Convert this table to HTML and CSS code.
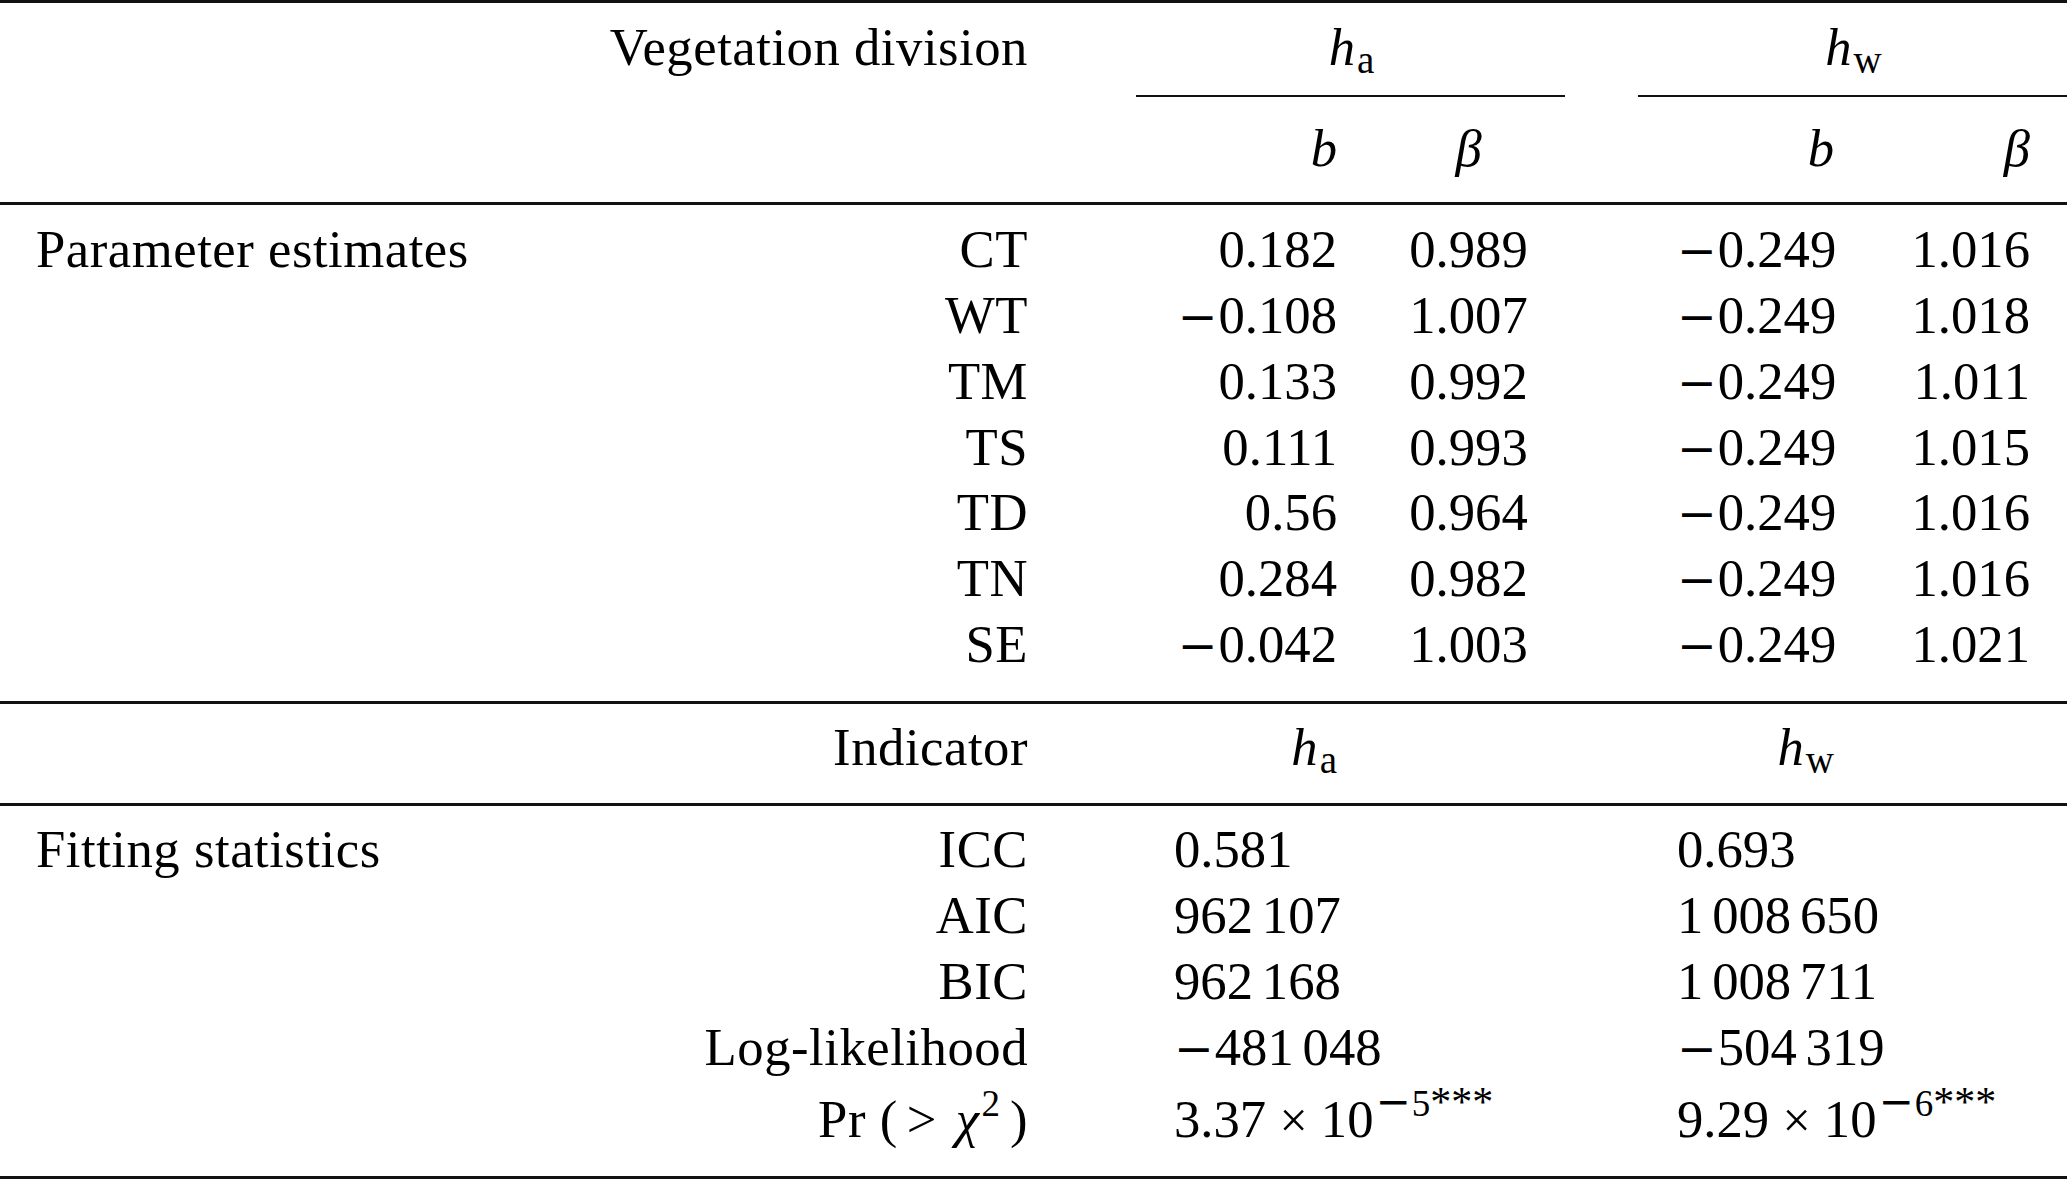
FILE: index.html
```html
<!DOCTYPE html>
<html lang="en">
<head>
<meta charset="utf-8">
<title>Model estimates table</title>
<link rel="stylesheet" href="styles.css">
</head>
<body>
<div class="table">
  <div class="rule rule-top"></div>

  <div class="c-label"></div>
  <div class="c-div">Vegetation division</div>
  <div class="c-g1"><i class="m">h</i><span class="sub">a</span></div>
  <div class="c-g2"><i class="m">h</i><span class="sub">w</span></div>

  <div class="cmid cmid-1"></div>
  <div class="cmid cmid-2"></div>

  <div class="c-b1"><i class="m">b</i></div>
  <div class="c-beta1"><i class="m">β</i></div>
  <div class="c-b2"><i class="m">b</i></div>
  <div class="c-beta2"><i class="m">β</i></div>

  <div class="rule rule-head"></div>

  <div class="c-label">Parameter estimates</div>
  <div class="c-div">CT</div>
  <div class="c-b1">0.182</div>
  <div class="c-beta1">0.989</div>
  <div class="c-b2"><span class="neg">−</span>0.249</div>
  <div class="c-beta2">1.016</div>

  <div class="c-label"></div>
  <div class="c-div">WT</div>
  <div class="c-b1"><span class="neg">−</span>0.108</div>
  <div class="c-beta1">1.007</div>
  <div class="c-b2"><span class="neg">−</span>0.249</div>
  <div class="c-beta2">1.018</div>

  <div class="c-label"></div>
  <div class="c-div">TM</div>
  <div class="c-b1">0.133</div>
  <div class="c-beta1">0.992</div>
  <div class="c-b2"><span class="neg">−</span>0.249</div>
  <div class="c-beta2">1.011</div>

  <div class="c-label"></div>
  <div class="c-div">TS</div>
  <div class="c-b1">0.111</div>
  <div class="c-beta1">0.993</div>
  <div class="c-b2"><span class="neg">−</span>0.249</div>
  <div class="c-beta2">1.015</div>

  <div class="c-label"></div>
  <div class="c-div">TD</div>
  <div class="c-b1">0.56</div>
  <div class="c-beta1">0.964</div>
  <div class="c-b2"><span class="neg">−</span>0.249</div>
  <div class="c-beta2">1.016</div>

  <div class="c-label"></div>
  <div class="c-div">TN</div>
  <div class="c-b1">0.284</div>
  <div class="c-beta1">0.982</div>
  <div class="c-b2"><span class="neg">−</span>0.249</div>
  <div class="c-beta2">1.016</div>

  <div class="c-label"></div>
  <div class="c-div">SE</div>
  <div class="c-b1"><span class="neg">−</span>0.042</div>
  <div class="c-beta1">1.003</div>
  <div class="c-b2"><span class="neg">−</span>0.249</div>
  <div class="c-beta2">1.021</div>

  <div class="rule rule-mid"></div>

  <div class="c-label"></div>
  <div class="c-div">Indicator</div>
  <div class="c-b1"><i class="m">h</i><span class="sub">a</span></div>
  <div class="c-b2"><i class="m">h</i><span class="sub">w</span></div>

  <div class="rule rule-ind"></div>

  <div class="c-label">Fitting statistics</div>
  <div class="c-div">ICC</div>
  <div class="c-v1">0.581</div>
  <div class="c-v2">0.693</div>

  <div class="c-label"></div>
  <div class="c-div">AIC</div>
  <div class="c-v1">962<span class="thin"></span>107</div>
  <div class="c-v2">1<span class="thin"></span>008<span class="thin"></span>650</div>

  <div class="c-label"></div>
  <div class="c-div">BIC</div>
  <div class="c-v1">962<span class="thin"></span>168</div>
  <div class="c-v2">1<span class="thin"></span>008<span class="thin"></span>711</div>

  <div class="c-label"></div>
  <div class="c-div">Log-likelihood</div>
  <div class="c-v1"><span class="neg">−</span>481<span class="thin"></span>048</div>
  <div class="c-v2"><span class="neg">−</span>504<span class="thin"></span>319</div>

  <div class="c-label last"></div>
  <div class="c-div last">Pr (<span class="gt">&gt;</span> <i class="m">χ</i><span class="sup">2</span><span class="paren">)</span></div>
  <div class="c-v1 last">3.37 <span class="times">×</span> 10<span class="sup"><span class="sup-neg">−</span>5<span class="stars">***</span></span></div>
  <div class="c-v2 last">9.29 <span class="times">×</span> 10<span class="sup"><span class="sup-neg">−</span>6<span class="stars">***</span></span></div>

  <div class="rule rule-bottom"></div>
</div>
</body>
</html>
```

FILE: styles.css
```css
html, body {
  margin: 0;
  padding: 0;
  background: #ffffff;
}

.table {
  display: grid;
  grid-template-columns: 560px 468px 146px 163px 71px 121px 148px 157px 77px 119px 37px;
  width: 2067px;
  font-family: "Liberation Serif", "Times New Roman", serif;
  font-size: 52.7px;
  line-height: 65.9px;
  color: #000000;
}

.table > div {
  white-space: nowrap;
}

.rule {
  grid-column: 1 / -1;
  height: 3px;
  background: #111111;
}

.rule-top { margin-bottom: 12px; }
.rule-head { margin-top: 20px; margin-bottom: 12px; }
.rule-mid { margin-top: 23px; margin-bottom: 11px; }
.rule-ind { margin-top: 22px; margin-bottom: 11px; }
.rule-bottom { margin-top: 22px; }

.cmid {
  height: 2px;
  background: #111111;
  margin-top: 14px;
  margin-bottom: 19px;
}

.cmid-1 {
  grid-column: 4 / 7;
  margin-left: -38px;
  margin-right: -36px;
}

.cmid-2 {
  grid-column: 8 / 12;
  margin-left: -39px;
}

.c-label {
  grid-column: 1;
  padding-left: 36px;
  letter-spacing: 0.01em;
}

.c-div {
  grid-column: 2;
  text-align: right;
  letter-spacing: 0.01em;
}

.c-g1 {
  grid-column: 4 / 7;
  text-align: center;
}

.c-g2 {
  grid-column: 8 / 11;
  text-align: center;
}

.c-b1 {
  grid-column: 4;
  text-align: right;
}

.c-beta1 {
  grid-column: 6;
  text-align: center;
}

.c-b2 {
  grid-column: 8;
  text-align: right;
}

.c-beta2 {
  grid-column: 10;
  text-align: right;
}

.c-v1 {
  grid-column: 4 / 8;
  text-align: left;
}

.c-v2 {
  grid-column: 8 / 12;
  text-align: left;
}

.last {
  padding-top: 6px;
}

.m {
  font-style: italic;
}

.sub {
  font-size: 0.74em;
  line-height: 0;
  vertical-align: -8px;
  margin-left: 2px;
}

.neg {
  font-family: "DejaVu Serif", "Liberation Serif", serif;
  font-size: 0.9em;
  line-height: 0;
  padding-right: 1px;
}

.thin {
  display: inline-block;
  width: 0.167em;
}

.times {
  font-size: 0.95em;
}

.sup {
  font-size: 37px;
  line-height: 0;
  vertical-align: 21px;
  margin-left: 2px;
  letter-spacing: 0;
}

.sup-neg {
  font-family: "DejaVu Serif", "Liberation Serif", serif;
  font-size: 42px;
  line-height: 0;
  padding-right: 1px;
}

.stars {
  font-size: 42px;
  line-height: 0;
}

.gt {
  margin-left: 9px;
  margin-right: 5px;
}

.paren {
  margin-left: 10px;
}
```
